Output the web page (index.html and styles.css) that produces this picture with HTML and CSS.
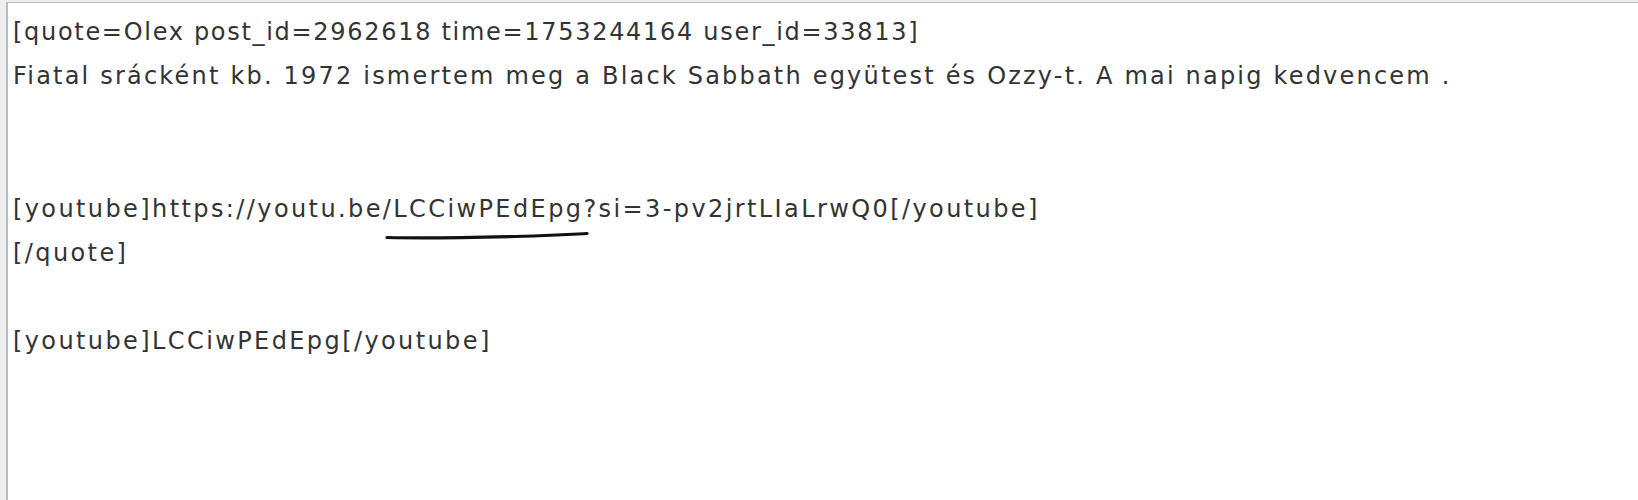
FILE: index.html
```html
<!DOCTYPE html>
<html lang="en">
<head>
    <meta charset="UTF-8">
    <meta name="viewport" content="width=device-width, initial-scale=1.0">
    <title>Reply</title>
    <link rel="stylesheet" href="styles.css">
</head>
<body>
    <div class="editor-wrap">
        <div class="editor">
            <div class="line digits">[quote=Olex post_id=2962618 time=1753244164 user_id=33813]</div>
            <div class="line prose">Fiatal srácként kb. 1972 ismertem meg a Black Sabbath együtest és Ozzy-t. A mai napig kedvencem .</div>
            <div class="line"></div>
            <div class="line"></div>
            <div class="line">[youtube]https://youtu.be/<span class="marked">LCCiwPEdEpg<svg class="pen" viewBox="0 0 204 10" preserveAspectRatio="none"><path d="M2 6.5 C 40 7.5, 90 6.5, 130 5.5 S 185 3.5, 202 2.5" /></svg></span>?si=3-pv2jrtLIaLrwQ0[/youtube]</div>
            <div class="line">[/quote]</div>
            <div class="line"></div>
            <div class="line">[youtube]LCCiwPEdEpg[/youtube]</div>
        </div>
    </div>
</body>
</html>
```

FILE: styles.css
```css
* {
    padding: 0;
    margin: 0;
    box-sizing: border-box;
}

:root {
    --text-color: #333333;
    --bg-color: #efefef;
    --border-color: #b8bcc0;
}

body {
    background-color: var(--bg-color);
    font-family: "DejaVu Sans", Verdana, sans-serif;
    overflow: hidden;
}

.editor-wrap {
    padding: 2px 0 0 6px;
    height: 100vh;
}

.editor {
    background-color: #ffffff;
    border-top: 1px solid var(--border-color);
    border-left: 2px solid var(--border-color);
    height: 100%;
    padding: 7px 0 0 5px;
    color: var(--text-color);
    font-size: 24px;
    letter-spacing: 2.4px;
}

.line {
    height: 44.2px;
    line-height: 44.2px;
    white-space: pre;
}

/* the digits of this font run wide, so the header line is set a touch tighter */
.digits {
    letter-spacing: 1.7px;
}

.prose {
    letter-spacing: 2.2px;
}

.marked {
    position: relative;
}

.pen {
    position: absolute;
    left: -8px;
    top: 36px;
    width: calc(100% + 14px);
    height: 10px;
    fill: none;
    stroke: #111111;
    stroke-width: 3.2;
    stroke-linecap: round;
}

.pen path {
    vector-effect: non-scaling-stroke;
}
```
